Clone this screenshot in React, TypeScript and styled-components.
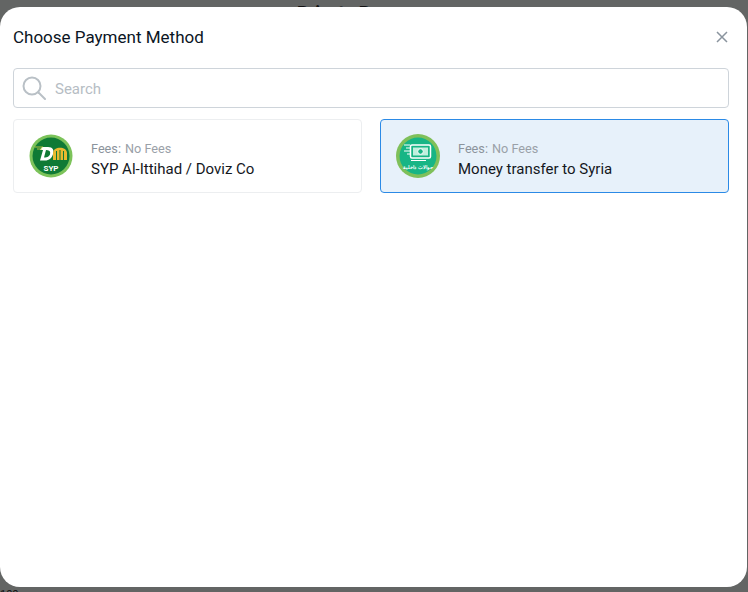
import React from "react";
import styled, { createGlobalStyle } from "styled-components";

const Global = createGlobalStyle`
  html, body { margin: 0; padding: 0; height: 100%; background: #636564; overflow: hidden; }
  #root { height: 100%; }
  * { box-sizing: border-box; }
`;

const Backdrop = styled.div`
  position: relative;
  width: 748px;
  height: 592px;
  padding: 7px 1px 5px 0;
  background: #636564;
  font-family: Roboto, "Noto Sans", sans-serif;
  overflow: hidden;
`;

const BehindTitle = styled.div`
  position: absolute;
  top: 2px;
  left: 297px;
  font-size: 18px;
  font-weight: 700;
  line-height: 22px;
  color: #111;
  white-space: nowrap;
`;

const BehindFoot = styled.div`
  position: absolute;
  top: 589px;
  left: 0;
  font-size: 11px;
  line-height: 12px;
  color: #111;
`;

const Modal = styled.section`
  position: relative;
  z-index: 1;
  height: 100%;
  background: #fff;
  border-radius: 20px;
  padding: 18px 18px 0 13px;
`;

const Header = styled.header`
  display: flex;
  align-items: center;
  justify-content: space-between;
  height: 24px;
  margin-bottom: 19px;
`;

const Title = styled.h2`
  margin: 0;
  font-size: 17px;
  font-weight: 400;
  line-height: 25px;
  color: #0b1524;
`;

const Close = styled.button`
  display: flex;
  width: 14px;
  height: 14px;
  padding: 0;
  border: 0;
  background: none;
  color: #8a949e;
`;

const SearchBox = styled.label`
  display: flex;
  align-items: center;
  gap: 9px;
  height: 40px;
  padding: 0 8px;
  margin-bottom: 11px;
  border: 1px solid #ced4da;
  border-radius: 4px;
  color: #b9c0c6;
`;

const SearchInput = styled.input`
  flex: 1;
  min-width: 0;
  height: 24px;
  border: 0;
  outline: 0;
  padding: 1px 0 0;
  background: none;
  font: inherit;
  font-size: 15px;
  color: #333;
  &::placeholder { color: #b6bdc4; opacity: 1; }
`;

const Methods = styled.div`
  display: grid;
  grid-template-columns: 349px 349px;
  column-gap: 18px;
`;

const Method = styled.button<{ $active?: boolean }>`
  display: flex;
  align-items: center;
  gap: 18px;
  height: 74px;
  padding: 0 15px;
  text-align: left;
  font: inherit;
  border: 1px solid ${(p) => (p.$active ? "#2b8ae6" : "#eceef0")};
  border-radius: 4px;
  background: ${(p) => (p.$active ? "#e7f1fa" : "#fff")};
`;

const Logo = styled.svg`
  flex: none;
  width: 44px;
  height: 46px;
`;

const Info = styled.span`
  display: flex;
  flex-direction: column;
  gap: 1px;
  padding-top: 6px;
`;

const Fees = styled.span`
  font-size: 12.7px;
  line-height: 18px;
  color: #9aa1a8;
`;

const FeesLabel = styled.span`
  color: #8c949c;
  margin-right: 4px;
`;

const Name = styled.span`
  font-size: 15px;
  line-height: 20px;
  color: #14181d;
`;

const LogoText = styled.text`
  font-family: Roboto, "Noto Sans", sans-serif;
  font-weight: 700;
  fill: #fff;
`;

const DovizLogo = () => (
  <Logo viewBox="0 0 44 46">
    <circle cx="22" cy="23" r="21.500" fill="#7cc35a" />
    <circle cx="22" cy="23" r="18.500" fill="#0f7a35" />
    <path d="M13 14h6c5 0 6 3 5.200 6.500C23.200 25 20 27.500 16 27.500h-5l3-10.500h-3z M17 17l-2 7.500h1.500c3 0 4.700-2 4.700-4.700 0-2-1.500-2.800-4.200-2.800z" fill="#fff" fillRule="evenodd" />
    <path d="M6 14h8M8 16h5" stroke="#d8d040" strokeWidth="0.800" />
    <path d="M24 20c0-7 14-7 14 0v7h-14z" fill="#e9b92f" />
    <path d="M27.500 18v9M31 17v10M34.500 18v9" stroke="#0f7a35" strokeWidth="1" />
    <LogoText x="22" y="37.500" fontSize="8" textAnchor="middle">SYP</LogoText>
  </Logo>
);

const TransferLogo = () => (
  <Logo viewBox="0 0 44 46">
    <circle cx="22" cy="23" r="22" fill="#7fc05a" />
    <circle cx="22" cy="23" r="18.500" fill="#17b585" />
    <rect x="14.500" y="12" width="20" height="13" rx="1.500" fill="#17b585" stroke="#fff" strokeWidth="1.500" />
    <rect x="17" y="14.500" width="15" height="8" fill="#bff0de" />
    <circle cx="24.500" cy="18.500" r="2.800" fill="#17b585" stroke="#fff" strokeWidth="1" />
    <path d="M8 12h6M10 15h4M8 18h6M11 21h3M15 27.500h15" stroke="#fff" strokeWidth="1" />
    <LogoText x="22" y="36" fontSize="5.200" textAnchor="middle" direction="rtl">حوالات داخلية</LogoText>
  </Logo>
);

export default function App() {
  return (
    <>
      <Global />
      <Backdrop>
        <BehindTitle>Private Pay</BehindTitle>
        <BehindFoot>100</BehindFoot>
        <Modal>
          <Header>
            <Title>Choose Payment Method</Title>
            <Close aria-label="Close">
              <svg width="14" height="14" viewBox="0 0 14 14" fill="none" stroke="currentColor" strokeWidth="1.500">
                <path d="M2 2l10 10M12 2L2 12" />
              </svg>
            </Close>
          </Header>
          <SearchBox>
            <svg width="24" height="24" viewBox="0 0 24 24" fill="none" stroke="currentColor" strokeWidth="2" strokeLinecap="round">
              <circle cx="10" cy="10" r="8.500" />
              <path d="M16.500 16.500L23 23" />
            </svg>
            <SearchInput placeholder="Search" />
          </SearchBox>
          <Methods>
            <Method>
              <DovizLogo />
              <Info>
                <Fees><FeesLabel>Fees:</FeesLabel>No Fees</Fees>
                <Name>SYP Al-Ittihad / Doviz Co</Name>
              </Info>
            </Method>
            <Method $active>
              <TransferLogo />
              <Info>
                <Fees><FeesLabel>Fees:</FeesLabel>No Fees</Fees>
                <Name>Money transfer to Syria</Name>
              </Info>
            </Method>
          </Methods>
        </Modal>
      </Backdrop>
    </>
  );
}
